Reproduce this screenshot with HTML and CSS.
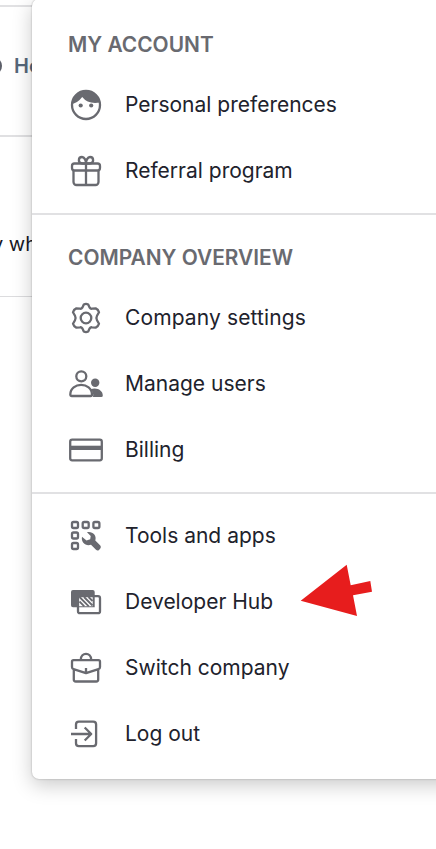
FILE: index.html
```html
<!DOCTYPE html>
<html lang="en">
<head>
<meta charset="utf-8">
<title>Account menu</title>
<link rel="stylesheet" href="styles.css">
</head>
<body>
<div class="page">
  <div class="topbar"></div>
  <div class="toolbar"><span class="dot"></span><span class="help">Help</span></div>
  <div class="content"><span>y what</span></div>
</div>
<nav class="menu">
  <section class="group">
    <h2>MY ACCOUNT</h2>
    <a class="item"><svg viewBox="0 0 36 36"><circle cx="18" cy="18" r="14"/><path class="solid" d="M4 17.200Q10 15.500 14.200 10Q20 17.500 31.800 15.500L31 12A14.500 14.500 0 0 0 5 12Z"/><circle class="solid" cx="12.700" cy="18.500" r="2.100"/><circle class="solid" cx="23.200" cy="18.500" r="2.100"/></svg><span>Personal preferences</span></a>
    <a class="item"><svg viewBox="0 0 36 36"><rect x="4" y="10.500" width="28" height="7" rx="2.500"/><path d="M5.500 17.500V29a3 3 0 0 0 3 3h19a3 3 0 0 0 3-3V17.500M18 10.500V32M18 10.500H14.500C9.500 10.500 10 4 14 4C16.500 4 18 7.500 18 10.500ZM18 10.500H21.500C26.500 10.500 26 4 22 4C19.500 4 18 7.500 18 10.500Z"/></svg><span>Referral program</span></a>
  </section>
  <section class="group">
    <h2>COMPANY OVERVIEW</h2>
    <a class="item"><svg viewBox="0 0 36 36"><circle cx="18" cy="18" r="5.300"/><path d="M15.800 4.500Q18 3.300 20.200 4.500L21.700 7.700Q22.500 9 24 8.700L27.700 8.400Q30.300 9.600 31 12.200L29 15.800Q27.800 18 29 20.200L31 23.800Q30.300 26.400 27.700 27.600L24 27.300Q22.500 27 21.700 28.300L20.200 31.500Q18 32.700 15.800 31.500L14.300 28.300Q13.500 27 12 27.300L8.300 27.600Q5.700 26.400 5 23.800L7 20.200Q8.200 18 7 15.800L5 12.200Q5.700 9.600 8.300 8.400L12 8.700Q13.500 9 14.300 7.700Z"/></svg><span class="wide">Company settings</span></a>
    <a class="item"><svg viewBox="0 0 36 36"><circle cx="13.300" cy="10.300" r="5"/><path d="M2.300 28.500C2.300 15.700 24 15.700 24 28.500Q24 30 22.500 30H3.800Q2.300 30 2.300 28.500Z"/><circle class="solid" cx="27.200" cy="16.700" r="4.200"/><path class="solid" d="M22.500 23.500C28 21 34.800 24 34.800 29.500Q34.800 31 33.300 31H25Q26 26.500 22.500 23.500Z"/></svg><span>Manage users</span></a>
    <a class="item"><svg viewBox="0 0 36 36"><rect x="2.200" y="7.700" width="31.600" height="20.600" rx="2"/><path class="solid" d="M2 13.700H34V18H2Z"/></svg><span>Billing</span></a>
  </section>
  <section class="group">
    <a class="item"><svg viewBox="0 0 36 36"><rect x="4" y="4" width="6" height="6" rx="1.500"/><rect x="14.700" y="4" width="6" height="6" rx="1.500"/><rect x="25.400" y="4" width="6" height="6" rx="1.500"/><rect x="4" y="14.500" width="6" height="6" rx="1.500"/><rect x="4" y="25" width="6" height="6" rx="1.500"/><path class="solid" d="M19 14.200C24.500 13 29 17.500 27.300 22.500L32.300 27.600Q33.500 29 32.300 30.500L31 31.900Q29.500 33 28 31.800L23 26.700C18 28.500 12.800 24.500 14 18.700L18.500 22.500L22.200 21.200L22.700 18Z"/></svg><span>Tools and apps</span></a>
    <a class="item"><svg viewBox="0 0 36 36"><rect x="10" y="12.200" width="22" height="17" rx="2"/><path class="solid" fill-rule="evenodd" d="M5 6H24.700Q26.700 6 26.700 8V23.300H5Q3 23.300 3 21.300V8Q3 6 5 6ZM11 13V22.300H24.700V13Z"/><path class="thin" d="M11.500 17.500L16.300 22.300M11.500 13L20.800 22.300M16 13L24.500 21.500M20.500 13L24.500 17"/></svg><span>Developer Hub</span></a>
    <a class="item"><svg viewBox="0 0 36 36"><path d="M12.800 9.800C12.800 2 23.200 2 23.200 9.800M5.500 10.200H30.500Q32 10.200 32 11.700V17Q32 18.700 30.500 19.200L18 23.200L5.500 19.200Q4 18.700 4 17V11.700Q4 10.200 5.500 10.200ZM5.800 19.500V29.500Q5.800 31.500 7.800 31.500H28.200Q30.200 31.500 30.200 29.500V19.500M18 18V23"/></svg><span>Switch company</span></a>
    <a class="item"><svg viewBox="0 0 36 36"><path d="M8 13V8.500Q8 5.700 10.800 5.700H25.300Q28.100 5.700 28.100 8.500V27.300Q28.100 30.100 25.300 30.100H10.800Q8 30.100 8 27.300V23M3 18H23M16.700 11.500L23.200 18L16.700 24.500"/></svg><span>Log out</span></a>
  </section>
</nav>
<svg class="pointer" viewBox="0 0 72 52"><path d="M.700 36.700L46.700.700L50.700 21.300L70.300 17L72 27.700L53 31.300L57 52Z"/></svg>
</body>
</html>
```
FILE: styles.css
```css
* { box-sizing: border-box; }
body {
  margin: 0;
  height: 849px;
  position: relative;
  overflow: hidden;
  background: #fff;
  font-family: Inter, "Liberation Sans", sans-serif;
  font-size: 21px;
  color: #21222c;
}
.topbar { height: 7px; border-bottom: 2px solid #e1e1e3; }
.toolbar {
  height: 130px;
  border-bottom: 2px solid #e0e0e2;
  display: flex;
  align-items: center;
  padding-bottom: 10px;
  font-weight: 600;
  color: #56677a;
  font-size: 20px;
}
.dot {
  width: 18px;
  height: 18px;
  border-radius: 50%;
  background: #5c5f69;
  margin-left: -16px;
  margin-right: 12px;
}
.content {
  height: 160px;
  border-bottom: 1px solid #dcdcde;
  padding-top: 94px;
  line-height: 26px;
  white-space: nowrap;
  font-size: 20px;
  color: #171826;
}
.content span { display: block; margin-left: -8px; }
.menu {
  position: absolute;
  left: 32px;
  top: -1px;
  width: 440px;
  height: 780px;
  padding-top: 24px;
  border-radius: 7px;
  background: #fff;
  box-shadow: 0 0 2px rgba(0,0,0,.3), 0 6px 20px rgba(0,0,0,.21);
}
.group + .group { border-top: 2px solid #e1e1e3; margin-top: 9px; padding-top: 9px; }
h2 {
  margin: 0 0 5px;
  height: 44px;
  padding-left: 36px;
  font-size: 20.9px;
  line-height: 44px;
  font-weight: 600;
  color: #696a70;
}
.group + .group h2 { height: 58px; line-height: 68px; margin-bottom: 3px; }
.item {
  display: flex;
  align-items: center;
  height: 66px;
  padding-left: 36px;
  gap: 21px;
  white-space: nowrap;
}
.item span { padding-bottom: 2px; }
.item .wide { letter-spacing: .12px; }
.item svg {
  width: 36px;
  height: 36px;
  flex: none;
  fill: none;
  stroke: #696a70;
  stroke-width: 2.3;
  stroke-linejoin: round;
}
.item svg .solid { fill: #696a70; stroke: none; }
.item svg .thin { stroke-width: 1.8; }
.pointer { position: absolute; left: 300px; top: 564px; width: 72px; height: 52px; fill: #e71d1d; }
```
